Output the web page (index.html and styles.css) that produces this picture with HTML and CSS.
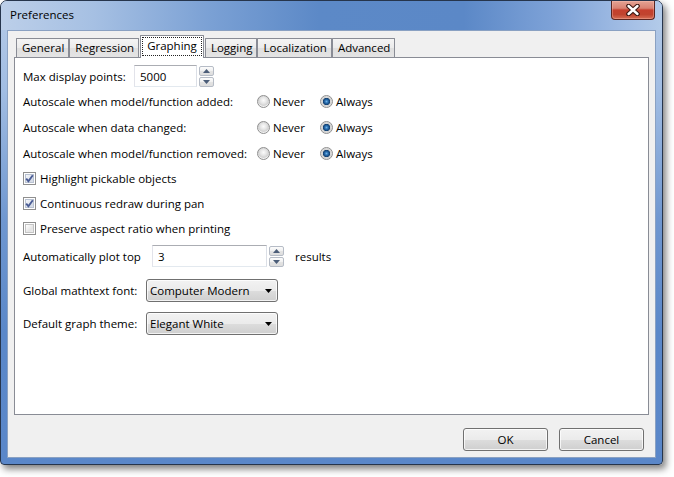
FILE: index.html
```html
<!DOCTYPE html>
<html>
<head>
<meta charset="utf-8">
<title>Preferences</title>
<link rel="stylesheet" href="styles.css">
</head>
<body>
<div class="window">
  <div class="titlebar">
    <span class="title">Preferences</span>
    <div class="close">
      <svg width="16" height="12" viewBox="0 0 16 12">
        <path d="M3.5 2 L12.5 10 M12.5 2 L3.5 10" stroke="#3a1712" stroke-width="4.6" stroke-linecap="round" fill="none"/>
        <path d="M3.5 2 L12.5 10 M12.5 2 L3.5 10" stroke="#ffffff" stroke-width="2.4" stroke-linecap="round" fill="none"/>
      </svg>
    </div>
  </div>
  <div class="client">
    <div class="tabs">
      <div class="tab">General</div>
      <div class="tab">Regression</div>
      <div class="tab selected"><span class="focus">Graphing</span></div>
      <div class="tab">Logging</div>
      <div class="tab">Localization</div>
      <div class="tab">Advanced</div>
    </div>
    <div class="pane">
      <div class="row row-spin">
        <span class="label label-max">Max display points:</span>
        <div class="spin">
          <div class="field field-max">5000</div>
          <div class="spin-btns">
            <div class="spin-btn"><svg width="7" height="4" viewBox="0 0 7 4"><path d="M0 4 L3.5 0 L7 4 Z" fill="#4b5d78"/></svg></div>
            <div class="spin-btn"><svg width="7" height="4" viewBox="0 0 7 4"><path d="M0 0 L3.5 4 L7 0 Z" fill="#4b5d78"/></svg></div>
          </div>
        </div>
      </div>
      <div class="row row-radio">
        <span class="label label-auto">Autoscale when model/function added:</span>
        <span class="opt opt-never"><span class="radio"></span>Never</span>
        <span class="opt"><span class="radio on"></span>Always</span>
      </div>
      <div class="row row-radio">
        <span class="label label-auto">Autoscale when data changed:</span>
        <span class="opt opt-never"><span class="radio"></span>Never</span>
        <span class="opt"><span class="radio on"></span>Always</span>
      </div>
      <div class="row row-radio">
        <span class="label label-auto">Autoscale when model/function removed:</span>
        <span class="opt opt-never"><span class="radio"></span>Never</span>
        <span class="opt"><span class="radio on"></span>Always</span>
      </div>
      <div class="row row-check">
        <span class="check on"><svg width="9" height="9" viewBox="0 0 9 9"><path d="M1.2 4.6 L3.4 7.2 L7.8 1.2" stroke="#4a5c95" stroke-width="1.9" fill="none"/></svg></span>
        <span>Highlight pickable objects</span>
      </div>
      <div class="row row-check">
        <span class="check on"><svg width="9" height="9" viewBox="0 0 9 9"><path d="M1.2 4.6 L3.4 7.2 L7.8 1.2" stroke="#4a5c95" stroke-width="1.9" fill="none"/></svg></span>
        <span>Continuous redraw during pan</span>
      </div>
      <div class="row row-check">
        <span class="check"></span>
        <span>Preserve aspect ratio when printing</span>
      </div>
      <div class="row row-plot">
        <span class="label label-plot">Automatically plot top</span>
        <div class="spin">
          <div class="field field-plot">3</div>
          <div class="spin-btns">
            <div class="spin-btn"><svg width="7" height="4" viewBox="0 0 7 4"><path d="M0 4 L3.5 0 L7 4 Z" fill="#4b5d78"/></svg></div>
            <div class="spin-btn"><svg width="7" height="4" viewBox="0 0 7 4"><path d="M0 0 L3.5 4 L7 0 Z" fill="#4b5d78"/></svg></div>
          </div>
        </div>
        <span class="results">results</span>
      </div>
      <div class="row row-combo">
        <span class="label label-combo">Global mathtext font:</span>
        <div class="combo"><span>Computer Modern</span><svg width="7" height="4" viewBox="0 0 7 4"><path d="M0 0 L3.5 4 L7 0 Z" fill="#000"/></svg></div>
      </div>
      <div class="row row-combo">
        <span class="label label-combo">Default graph theme:</span>
        <div class="combo"><span>Elegant White</span><svg width="7" height="4" viewBox="0 0 7 4"><path d="M0 0 L3.5 4 L7 0 Z" fill="#000"/></svg></div>
      </div>
    </div>
    <div class="buttons">
      <div class="btn">OK</div>
      <div class="btn">Cancel</div>
    </div>
  </div>
</div>
</body>
</html>
```
FILE: styles.css
```css
html, body {
  margin: 0;
  padding: 0;
}
body {
  width: 674px;
  height: 477px;
  overflow: hidden;
  background: #ffffff;
  font-family: "Open Sans", "Noto Sans", sans-serif;
  font-size: 11.5px;
  color: #000;
}

.window {
  box-sizing: border-box;
  width: 663px;
  height: 465px;
  border: 1px solid #26354c;
  border-radius: 7px 7px 4px 4px;
  padding: 0 6px 6px;
  display: flex;
  flex-direction: column;
  background: linear-gradient(to bottom, #b6cbe7 0, #a1bde3 90px, #6f97d0 220px, #5b88c9 330px, #5a87c9 100%);
  box-shadow: 3px 4px 7px rgba(0, 0, 0, 0.5);
}

.titlebar {
  position: relative;
  height: 29px;
  margin: 0 -6px;
  padding: 0 9px;
  display: flex;
  align-items: center;
  border-radius: 6px 6px 0 0;
  background: linear-gradient(to right, #bccfe9 0%, #a6c0e3 14%, #7aa0d4 32%, #5c89c7 48%, #5b88c7 70%, #7fa3d8 84%, #a7c1e6 96%, #b3cbe9 100%);
}
.title {
  font-size: 11.5px;
  line-height: 1;
  padding-bottom: 1px;
}

.close {
  position: absolute;
  top: 0;
  right: 7px;
  width: 44px;
  height: 19px;
  box-sizing: border-box;
  border: 1px solid #5a2520;
  border-top: none;
  border-radius: 0 0 4px 4px;
  background: linear-gradient(to bottom, #e4a394 0%, #d98272 40%, #c5402e 50%, #c0442f 75%, #d66e55 100%);
  box-shadow: inset 0 0 0 1px rgba(255, 200, 190, 0.35);
  display: flex;
  align-items: center;
  justify-content: center;
}

.client {
  flex: 1;
  min-height: 0;
  border: 1px solid #8aa1c2;
  background: #f0f0f0;
  padding: 4px 6px 6px;
  display: flex;
  flex-direction: column;
}

.tabs {
  display: flex;
  align-items: flex-end;
  height: 22px;
  padding-left: 2px;
}
.tab {
  box-sizing: border-box;
  height: 19px;
  border: 1px solid #898c95;
  border-bottom: none;
  border-radius: 1px 1px 0 0;
  background: linear-gradient(to bottom, #f4f4f4 0%, #ebebeb 50%, #dfdfdf 51%, #e4e4e4 100%);
  padding: 0 4px 0 5px;
  display: flex;
  align-items: center;
  line-height: 1;
}
.tab.selected {
  position: relative;
  z-index: 1;
  height: 23px;
  margin: 0 1px -1px 1px;
  padding: 1px 1px 2px 1px;
  background: #ffffff;
}
.focus {
  box-sizing: border-box;
  height: 100%;
  display: flex;
  align-items: center;
  padding: 0 4px 2px;
  border: 1px dotted #222;
}

.pane {
  flex: 1;
  min-height: 0;
  border: 1px solid #898c95;
  background: #ffffff;
  padding: 6px 0 0 8px;
  display: flex;
  flex-direction: column;
}

.row {
  display: flex;
  align-items: center;
  white-space: nowrap;
}
.row-spin { height: 24px; }
.row-radio { height: 26px; }
.row-check { height: 25px; }
.row-plot { height: 30px; }
.row-combo { height: 25px; margin-top: 7px; }
.row-combo + .row-combo { margin-top: 8px; }

.label-max { width: 111px; }
.label-auto { width: 234px; }
.label-plot { width: 129px; }
.label-combo { width: 123px; }

.spin {
  display: flex;
  gap: 2px;
  height: 22px;
}
.field {
  box-sizing: border-box;
  height: 22px;
  border: 1px solid;
  border-color: #abadb3 #dbdfe6 #e3e9ef #e2e3ea;
  background: #fff;
  padding: 0 0 0 5px;
  display: flex;
  align-items: center;
}
.field-max { width: 63px; }
.field-plot { width: 115px; }
.spin-btns {
  display: flex;
  flex-direction: column;
  gap: 1px;
  padding-top: 1px;
}
.spin-btn {
  box-sizing: border-box;
  width: 15px;
  height: 10px;
  border: 1px solid #b6bcc6;
  border-radius: 2px;
  background: linear-gradient(to bottom, #fcfcfc 0%, #f0f0f0 50%, #e3e3e3 51%, #dedede 100%);
  display: flex;
  align-items: center;
  justify-content: center;
}
.results { margin-left: 11px; }

.opt {
  display: flex;
  align-items: center;
  gap: 3px;
}
.opt-never { width: 63px; }
.radio {
  box-sizing: border-box;
  width: 13px;
  height: 13px;
  border-radius: 50%;
  border: 1px solid #8f8f8f;
  background: radial-gradient(circle at 50% 40%, #fbfbfb 0, #e6e6e6 3px, #d2d2d2 5px, #f3f3f3 6px);
}
.radio.on {
  background: radial-gradient(circle at 50% 50%, #6fb2e6 0, #2a6fb0 1.6px, #17497f 3px, #0f3a66 3.4px, #d8d8d8 3.9px, #cfcfcf 4.6px, #f0f0f0 6px);
}

.check {
  box-sizing: border-box;
  width: 13px;
  height: 13px;
  border: 1px solid #8f8f8f;
  margin-right: 4px;
  display: flex;
  align-items: center;
  justify-content: center;
  box-shadow: inset 0 0 0 1px #fff, inset 0 0 0 2px #c4c4c4;
  background: linear-gradient(135deg, #fff 0, #fff 20%, #e3e3e3 60%, #f5f5f5 100%);
}
.check.on {
  box-shadow: inset 0 0 0 1px #fff, inset 0 0 0 2px #b9c2d2;
  background: linear-gradient(135deg, #fff 0, #f4f6fa 20%, #d5dbe6 70%, #e8ecf3 100%);
}

.combo {
  box-sizing: border-box;
  width: 132px;
  height: 23px;
  border: 1px solid #707070;
  border-radius: 3px;
  background: linear-gradient(to bottom, #f2f2f2 0%, #ebebeb 50%, #dddddd 51%, #cfcfcf 100%);
  box-shadow: inset 0 0 0 1px rgba(255, 255, 255, 0.75);
  display: flex;
  align-items: center;
  justify-content: space-between;
  padding: 0 5px 0 3px;
}

.buttons {
  display: flex;
  justify-content: flex-end;
  gap: 11px;
  padding: 13px 5px 0 0;
}
.btn {
  box-sizing: border-box;
  width: 85px;
  height: 23px;
  border: 1px solid #707070;
  border-radius: 3px;
  background: linear-gradient(to bottom, #f2f2f2 0%, #ebebeb 50%, #dddddd 51%, #cfcfcf 100%);
  box-shadow: inset 0 0 0 1px rgba(255, 255, 255, 0.75);
  display: flex;
  align-items: center;
  justify-content: center;
}
```
